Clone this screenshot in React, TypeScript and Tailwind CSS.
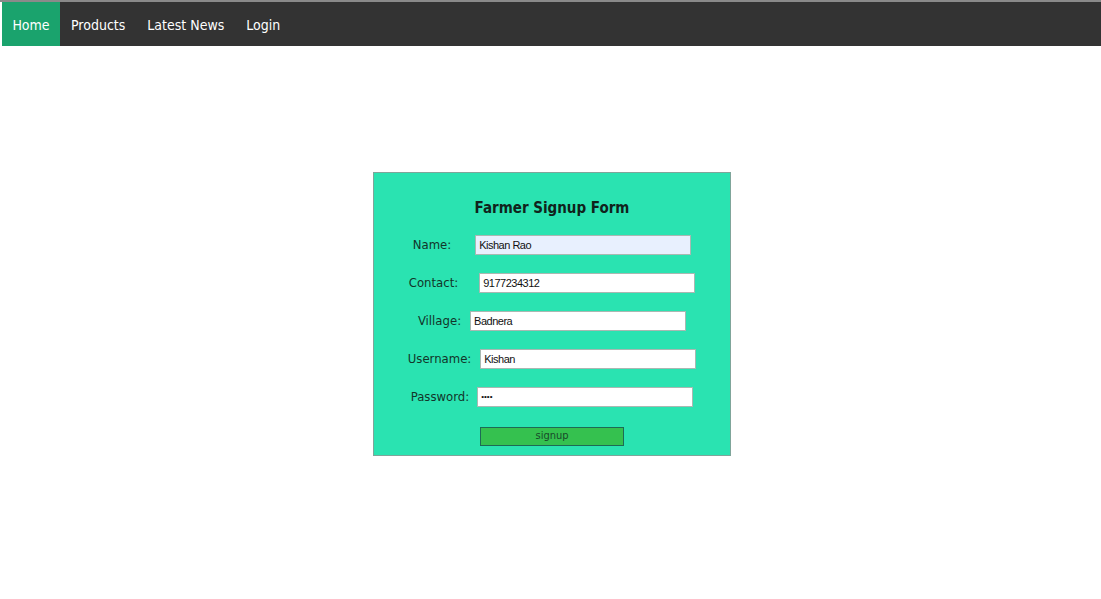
import React from "react";

const rows: { label: string; value: string; gap: number; bg?: string; type?: string }[] = [
  { label: "Name:", value: "Kishan Rao", gap: 24, bg: "bg-[#e8f0fe]" },
  { label: "Contact:", value: "9177234312", gap: 21 },
  { label: "Village:", value: "Badnera", gap: 9 },
  { label: "Username:", value: "Kishan", gap: 9 },
  { label: "Password:", value: "••••", gap: 8, type: "password" },
];

export default function App() {
  return (
    <div className="w-[1101px] h-[599px] bg-white overflow-hidden" style={{ fontFamily: '"DejaVu Sans Condensed", "DejaVu Sans", Verdana, sans-serif' }}>
      <div className="h-[2px] bg-[#8a8a8a]" />
      <nav className="ml-[2px] h-[44px] bg-[#333333] flex items-stretch text-[14px] text-white">
        <a className="bg-[#1aa36d] w-[58px] flex items-center justify-center pt-[2px]">Home</a>
        <a className="px-[11px] flex items-center pt-[2px]">Products</a>
        <a className="px-[11px] flex items-center pt-[2px]">Latest News</a>
        <a className="px-[11px] flex items-center pt-[2px]">Login</a>
      </nav>
      <div className="flex justify-center pt-[126px]">
        <div className="ml-[3px] w-[358px] h-[284px] bg-[#2ae3b1] border border-[#7fa59a] flex flex-col items-center pt-[25px]">
          <h2 className="text-[15px] font-bold text-[#10231c] leading-[20px]">Farmer Signup Form</h2>
          <div className="mt-[17px] flex flex-col items-center gap-[18px]">
            {rows.map((r) => (
              <div key={r.label} className="flex items-center h-[20px] text-[13px] text-[#12352a]" style={{ gap: r.gap }}>
                <span>{r.label}</span>
                <div
                  className={`w-[216px] h-[20px] border border-[#a9b8b2] ${r.bg ?? "bg-white"} flex items-center px-[3px] text-[11px] tracking-[-0.5px] text-[#111]`}
                  style={{ fontFamily: '"Liberation Sans", Arial, sans-serif' }}
                >
                  {r.type === "password" ? <span className="text-[8px] tracking-normal">••••</span> : r.value}
                </div>
              </div>
            ))}
          </div>
          <button className="mt-[20px] w-[144px] h-[19px] bg-[#35c14f] border border-[#1d6b55] text-[11px] text-[#184a2a] flex items-center justify-center">
            signup
          </button>
        </div>
      </div>
    </div>
  );
}
